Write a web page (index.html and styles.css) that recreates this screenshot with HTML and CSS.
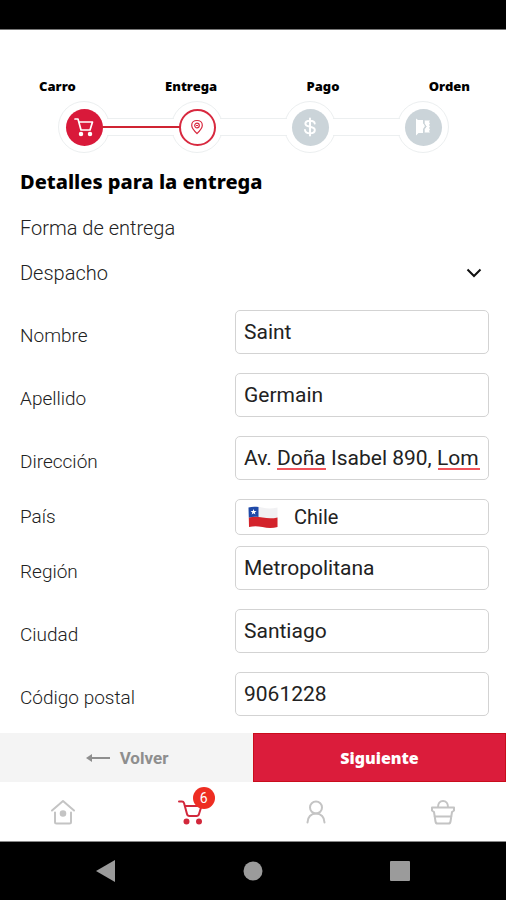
FILE: index.html
```html
<!DOCTYPE html>
<html lang="es">
<head>
<meta charset="utf-8">
<meta name="viewport" content="width=device-width, initial-scale=1">
<title>Detalles para la entrega</title>
<link rel="stylesheet" href="styles.css">
</head>
<body>
<div class="status-bar"></div>

<main class="content">
  <div class="step-labels">
    <span>Carro</span>
    <span>Entrega</span>
    <span>Pago</span>
    <span>Orden</span>
  </div>
  <div class="stepper">
    <div class="ring"><div class="dot dot-done">
      <svg width="22" height="22" viewBox="0 0 22 22" fill="none" stroke="#fff" stroke-width="1.700" stroke-linecap="round" stroke-linejoin="round"><path d="M2 3h3l3 11h9l2.500-8H6"/><circle cx="8" cy="18" r="1.400" fill="#fff"/><circle cx="17" cy="18" r="1.400" fill="#fff"/></svg>
    </div></div>
    <div class="link link-done"></div>
    <div class="ring"><div class="dot dot-current">
      <svg width="14" height="16" viewBox="0 0 14 16" fill="none" stroke="#d8293f" stroke-width="1.200" stroke-linejoin="round"><path d="M7 14.500C4 11.800 1.700 9.500 1.700 6.300 1.700 3.400 4 1.500 7 1.500s5.300 1.900 5.300 4.800c0 3.200-2.300 5.500-5.300 8.200z"/><circle cx="7" cy="6.500" r="2.300"/><path d="M6 6.500h2"/></svg>
    </div></div>
    <div class="link"></div>
    <div class="ring"><div class="dot dot-pending">
      <svg width="14" height="20" viewBox="0 0 14 20" fill="none" stroke="#fff" stroke-width="2" stroke-linecap="round"><path d="M7 1.500v17M11.700 6.500C11.500 4.600 9.500 3.700 7 3.700S2.400 4.900 2.400 6.800C2.400 11 11.800 8.600 11.800 13c0 2-2.100 3.300-4.800 3.300S2.200 15.100 2 13"/></svg>
    </div></div>
    <div class="link"></div>
    <div class="ring"><div class="dot dot-pending">
      <svg width="16" height="18" viewBox="0 0 16 18"><path fill="#fff" d="M1 0.500l2 1.500h5v3l2 3-2 3v4H3.500L1 17.500z"/><path fill="#fff" d="M9.500 2.500H15l-1 1.500 1 1.500-1 1.500 1 1.500-1 1.500 1 1.500-1 1.500 1 1.500H9.500v-3.500L11.500 8.500 9.500 5.500z"/><path d="M9 2.500v3l2 3-2 3v3" fill="none" stroke="#cbd4d9"/></svg>
    </div></div>
  </div>

  <h1 class="title">Detalles para la entrega</h1>
  <label class="method-label" for="metodo">Forma de entrega</label>
  <div class="method">
    <select id="metodo"><option>Despacho</option></select>
    <svg class="chevron" width="16" height="10" viewBox="0 0 16 10" fill="none" stroke="#111" stroke-width="2"><path d="M1.500 1.500L8 8l6.500-6.500"/></svg>
  </div>

  <form class="form" id="entrega">
    <div class="row"><label for="nombre">Nombre</label><input id="nombre" type="text" value="Saint"></div>
    <div class="row"><label for="apellido">Apellido</label><input id="apellido" type="text" value="Germain"></div>
    <div class="row"><label for="direccion">Dirección</label><input id="direccion" class="spelling" type="text" value="Av. Doña Isabel 890, Lom"></div>
    <div class="row row-country"><label for="pais">País</label>
      <div class="country">
        <svg width="30" height="22" viewBox="0 0 30 22"><path fill="#f1f1f3" d="M.500 1.500C5 .300 9 .300 14 1.500s10 1.200 15.500 0V21c-5 1.200-9.500 1.200-15 0s-9.500-1-13.500 0z"/><path fill="#d3232b" d="M.800 11.500c4.500-1 8.700-1 13.700 0s10 1.200 15 0V21c-5 1.200-9.500 1.200-15 0s-9.500-1-13.500 0z"/><path fill="#1f49a8" d="M.500 1.500C4 .500 7 .500 10.500 1v10C7 10.500 4 10.700.800 11.500z"/><path fill="#fff" d="M5.500 3l.8 2 2.200.1-1.700 1.300.6 2.100-1.900-1.200-1.800 1.200.6-2.100-1.700-1.300 2.200-.1z"/></svg>
        <select id="pais"><option>Chile</option></select>
      </div>
    </div>
    <div class="row"><label for="region">Región</label><input id="region" type="text" value="Metropolitana"></div>
    <div class="row"><label for="ciudad">Ciudad</label><input id="ciudad" type="text" value="Santiago"></div>
    <div class="row"><label for="postal">Código postal</label><input id="postal" type="text" value="9061228"></div>
  </form>
</main>

<div class="actions">
  <button class="back" type="button">
    <svg width="26" height="10" viewBox="0 0 26 10" fill="none" stroke="#8e8e8e" stroke-width="2"><path d="M3 5h22"/><path d="M1 5l6-4v8z" fill="#8e8e8e" stroke="none"/></svg>
    Volver
  </button>
  <button class="next" type="submit" form="entrega">Siguiente</button>
</div>

<nav class="tabs">
  <a href="#inicio" aria-label="Inicio"><svg width="26" height="26" viewBox="0 0 26 26" fill="none" stroke="#c4c4c4" stroke-width="2" stroke-linecap="round" stroke-linejoin="round"><path d="M2 11.500L13 2l11 9.500M5 13.500v9.500q0 1.500 1.500 1.500h13q1.500 0 1.500-1.500v-9.500"/><circle cx="13" cy="14.500" r="2.300" fill="#c4c4c4"/></svg></a>
  <a href="#carro" aria-label="Carro"><span class="cart"><svg width="26" height="26" viewBox="0 0 26 26" fill="none" stroke="#d2283c" stroke-width="2" stroke-linecap="round" stroke-linejoin="round"><path d="M2 2.500h3q1.500 0 2 1.500l3 11q.5 2 2.500 2h7q2 0 2.500-2L24.500 7H8.500"/><circle cx="9.500" cy="22.500" r="2" fill="#d2283c"/><circle cx="22" cy="22.500" r="2" fill="#d2283c"/></svg><span class="badge">6</span></span></a>
  <a href="#perfil" aria-label="Perfil"><svg width="26" height="26" viewBox="0 0 26 26" fill="none" stroke="#c4c4c4" stroke-width="2" stroke-linecap="round"><circle cx="13" cy="8.500" r="6"/><path d="M4.500 23.500c0-5.500 3.500-9 8.500-9s8.500 3.500 8.500 9"/></svg></a>
  <a href="#compras" aria-label="Compras"><svg width="26" height="26" viewBox="0 0 26 26" fill="none" stroke="#c4c4c4" stroke-width="2" stroke-linecap="round" stroke-linejoin="round"><path d="M2 8.500h22v3l-2 1.500-1.500 9.500q-.3 2-2 2h-11q-1.700 0-2-2L4 13 2 11.500zM4.500 17.500h17M8 8C8 4.500 10 2 13 2s5 2.500 5 6"/></svg></a>
</nav>

<div class="system-nav">
  <svg width="20" height="22" viewBox="0 0 20 22"><path fill="#9b9b9b" d="M0 11L19 0v22z"/></svg>
  <svg width="20" height="20" viewBox="0 0 20 20"><circle cx="10" cy="10" r="9.500" fill="#9b9b9b"/></svg>
  <svg width="20" height="20" viewBox="0 0 20 20"><rect width="20" height="20" rx="1" fill="#9b9b9b"/></svg>
</div>
</body>
</html>
```
FILE: styles.css
```css
* { box-sizing: border-box; }

body {
  margin: 0;
  min-height: 100vh;
  display: flex;
  flex-direction: column;
  background: #fff;
  color: #222;
  font-family: Roboto, "Liberation Sans", sans-serif;
}

svg { display: block; flex: none; }

input, select, button { font: inherit; color: inherit; margin: 0; }

select {
  appearance: none;
  border: 0;
  padding: 0;
  background: transparent;
}

.status-bar {
  height: 30px;
  background: #000;
  border-bottom: 1px solid #777;
}

.content {
  flex: 1;
  padding: 46px 17px 16px 20px;
}

/* Progress */
.step-labels {
  display: flex;
  justify-content: space-between;
  padding: 0 19px;
  font: 900 13px/20px "Noto Sans", sans-serif;
  color: #000;
}

.stepper {
  display: flex;
  align-items: center;
  margin-top: 5px;
  padding: 0 40px 0 38px;
}

.ring {
  flex: none;
  width: 52px;
  height: 52px;
  display: grid;
  place-items: center;
  border: 1px solid #eceff0;
  border-radius: 50%;
}

.dot {
  width: 37px;
  height: 37px;
  display: grid;
  place-items: center;
  border-radius: 50%;
}

.dot-done { background: #d9193a; }
.dot-current { border: 2px solid #d8293f; }
.dot-pending { background: #cbd4d9; }

.link {
  flex: 1;
  height: 18px;
  margin: 0 -3px;
  position: relative;
  display: flex;
  align-items: center;
  background: #fff;
  border: solid #eceff0;
  border-width: 1px 0;
}

.link-done::before {
  content: "";
  position: absolute;
  left: -6px;
  right: -6px;
  height: 2px;
  background: #d02433;
}

.title {
  margin: 15px 0 0;
  font: 800 20px/28px "Noto Sans", sans-serif;
  color: #000;
}

.method-label {
  display: block;
  margin-top: 20px;
  font-size: 20px;
  line-height: 24px;
  font-weight: 300;
}

.method {
  display: flex;
  align-items: center;
  margin-top: 21px;
  padding-right: 7px;
}

.method select {
  flex: 1;
  font-size: 20px;
  line-height: 24px;
  font-weight: 300;
}

/* Address form */
.form {
  display: grid;
  gap: 19px;
  margin-top: 25px;
}

.row {
  display: grid;
  grid-template-columns: 215fr 254fr;
  align-items: center;
}

.row label {
  padding-top: 8px;
  font-size: 19px;
  line-height: 24px;
  font-weight: 300;
}

.row-country { margin-bottom: -8px; }
.row-country label { padding-top: 0; }

.row input,
.country {
  width: 100%;
  min-width: 0;
  height: 44px;
  padding: 0 8px;
  border: 1px solid #d3d3d3;
  border-radius: 5px;
  background-color: #fff;
  font-size: 21px;
}

.country {
  height: 36px;
  display: flex;
  align-items: center;
  gap: 16px;
  padding-left: 12px;
}

.country select {
  flex: 1;
  font-size: 20px;
  line-height: 24px;
}

/* Spell-check marks under the unknown words */
.row .spelling {
  background-image: linear-gradient(#f0525a, #f0525a), linear-gradient(#f0525a, #f0525a);
  background-repeat: no-repeat;
  background-position: 41px 31px, 202px 31px;
  background-size: 49px 2px, 42px 2px;
}

/* Footer */
.actions {
  display: grid;
  grid-template-columns: 1fr 1fr;
  height: 49px;
}

.back, .next { border: 0; font-weight: 700; }

.back {
  display: flex;
  align-items: center;
  justify-content: center;
  gap: 9px;
  background: #f4f4f4;
  color: #8e8e8e;
  font-size: 17px;
}

.next {
  background: #db1c3b;
  border: 1px solid #c90d1c;
  color: #fff;
  font-family: "Noto Sans", sans-serif;
  font-size: 16px;
  font-weight: 900;
}

.tabs {
  display: grid;
  grid-template-columns: repeat(4, 1fr);
  height: 60px;
  border-bottom: 1px solid #888;
}

.tabs a {
  display: grid;
  place-items: center;
  text-decoration: none;
}

.cart { position: relative; }

.badge {
  position: absolute;
  left: 16px;
  top: -12px;
  width: 22px;
  height: 22px;
  border-radius: 50%;
  background: #ee2d22;
  color: #fff;
  font-size: 14px;
  line-height: 22px;
  text-align: center;
}

.system-nav {
  display: grid;
  grid-template-columns: repeat(3, 1fr);
  place-items: center;
  height: 58px;
  padding: 0 32px;
  background: #000;
}
```
